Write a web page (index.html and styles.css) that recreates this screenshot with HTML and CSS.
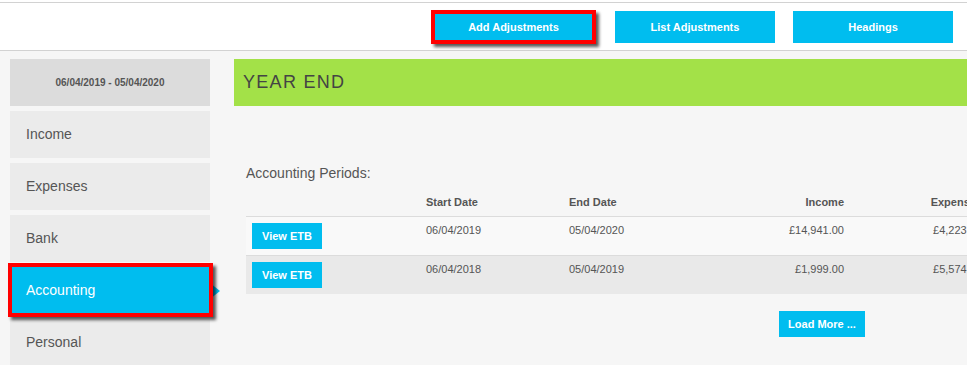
FILE: index.html
```html
<!DOCTYPE html>
<html lang="en">
<head>
    <meta charset="UTF-8">
    <title>Year End</title>
    <link rel="stylesheet" href="styles.css">
</head>
<body>

    <div class="topbar">
        <div class="topbar-inner">
            <button class="top-btn highlight">Add Adjustments</button>
            <button class="top-btn">List Adjustments</button>
            <button class="top-btn">Headings</button>
        </div>
    </div>

    <div class="layout">
        <div class="sidebar">
            <div class="period">06/04/2019 - 05/04/2020</div>
            <div class="nav-item">Income</div>
            <div class="nav-item">Expenses</div>
            <div class="nav-item">Bank</div>
            <div class="nav-item active">Accounting</div>
            <div class="nav-item">Personal</div>
        </div>

        <div class="main">
            <div class="title-bar">YEAR END</div>

            <h4 class="section-title">Accounting Periods:</h4>
            <table class="periods">
                <colgroup>
                    <col style="width:174px">
                    <col style="width:143px">
                    <col style="width:137px">
                    <col style="width:150px">
                    <col style="width:138px">
                    <col>
                </colgroup>
                <thead>
                    <tr>
                        <th></th>
                        <th>Start Date</th>
                        <th>End Date</th>
                        <th class="num">Income</th>
                        <th class="num">Expenses</th>
                        <th class="num">Net Profit</th>
                    </tr>
                </thead>
                <tbody>
                    <tr>
                        <td><button class="btn">View ETB</button></td>
                        <td>06/04/2019</td>
                        <td>05/04/2020</td>
                        <td class="num">£14,941.00</td>
                        <td class="num">£4,223.00</td>
                        <td class="num">£10,718.00</td>
                    </tr>
                    <tr class="alt">
                        <td><button class="btn">View ETB</button></td>
                        <td>06/04/2018</td>
                        <td>05/04/2019</td>
                        <td class="num">£1,999.00</td>
                        <td class="num">£5,574.40</td>
                        <td class="num">-£3,575.40</td>
                    </tr>
                </tbody>
            </table>

            <div class="more">
                <button class="btn">Load More ...</button>
            </div>
        </div>
    </div>

</body>
</html>
```

FILE: styles.css
```css
body { margin: 0; font-family: "Liberation Sans", Arial, sans-serif; color: #555; background-color: #f6f6f6; overflow: hidden; }

button { font-family: inherit; cursor: pointer; border: none; }

/* top bar */
.topbar { background-color: #fff; padding-top: 2px; }
.topbar-inner {
    height: 47px;
    border-top: 1px solid #d2d2d2;
    border-bottom: 1px solid #d2d2d2;
    display: flex;
    align-items: center;
    justify-content: flex-end;
    gap: 18px;
    padding-right: 14px;
}
.top-btn { width: 160px; height: 32px; background-color: #00bdef; color: #fff; font-size: 11px; font-weight: bold; }
.top-btn.highlight { width: 165px; height: 34px; border: 4px solid #f00; margin-right: 1px; box-shadow: 3px 3px 3px rgba(0, 0, 0, 0.65); }

/* layout */
.layout { display: flex; gap: 24px; padding: 8px 0 0 10px; }

.sidebar { width: 200px; flex-shrink: 0; display: flex; flex-direction: column; gap: 5px; }
.period { height: 47px; line-height: 47px; background-color: #dcdcdc; text-align: center; font-size: 10px; font-weight: bold; }
.nav-item { height: 47px; line-height: 47px; background-color: #ebebeb; padding-left: 16px; font-size: 14px; }
.nav-item.active { position: relative; background-color: #00bdef; color: #fff; }
.nav-item.active::before {
    content: "";
    position: absolute;
    left: 100%;
    top: 50%;
    margin-top: -8px;
    border-left: 10px solid #00bdef;
    border-top: 8px solid transparent;
    border-bottom: 8px solid transparent;
}
.nav-item.active::after {
    content: "";
    position: absolute;
    top: -4px;
    left: -2px;
    right: -3px;
    bottom: -3px;
    border: 4px solid #f00;
    box-shadow: 3px 3px 3px rgba(0, 0, 0, 0.65);
}

/* main */
.main { flex: 1; min-width: 0; }
.title-bar { height: 47px; line-height: 47px; background-color: #a3e148; padding-left: 9px; font-size: 18px; letter-spacing: 1.3px; color: #444; }

.section-title { margin: 58px 0 0 12px; font-size: 14px; font-weight: normal; line-height: 18px; }

.periods { margin-left: 12px; width: 1152px; table-layout: fixed; border-collapse: collapse; font-size: 11px; }
.periods th { text-align: left; font-weight: bold; line-height: 12px; padding: 14px 6px 8px; border-bottom: 1px solid #dcdcdc; }
.periods td { vertical-align: top; line-height: 13px; padding: 7px 6px 0; height: 31px; background-color: #f9f9f9; }
.periods tr.alt td { background-color: #e9e9e9; border-top: 1px solid #dcdcdc; }
.periods td:first-child { padding-top: 6px; }
.periods .num { text-align: right; }

.btn { background-color: #00bdef; color: #fff; font-size: 11px; font-weight: bold; height: 26px; padding: 0 10px; }

.more { width: 1152px; margin-left: 12px; margin-top: 17px; text-align: center; }
.more .btn { padding: 0 9px; }
```
